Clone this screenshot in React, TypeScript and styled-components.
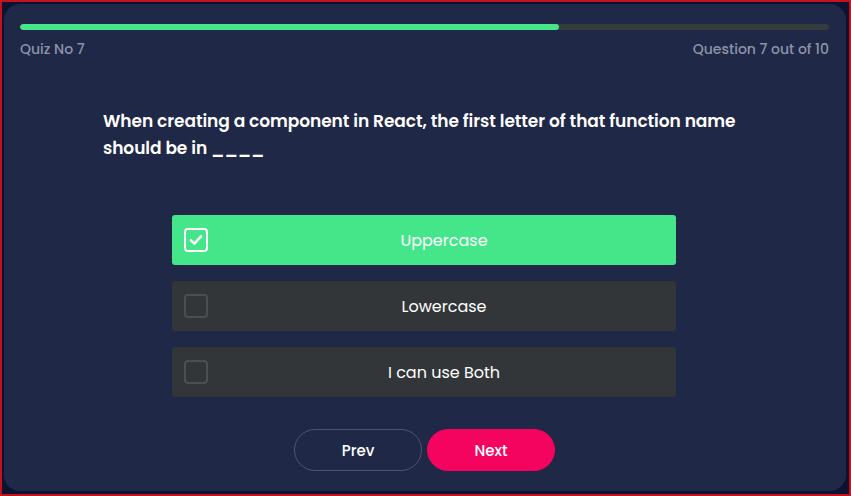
import React from "react";
import styled, { createGlobalStyle } from "styled-components";

const Global = createGlobalStyle`
  html, body { margin: 0; padding: 0; }
  body { background: #0e1232; font-family: "Poppins", "Inter", "Noto Sans", sans-serif; }
  #root { width: 851px; height: 496px; }
`;

const Frame = styled.div`
  box-sizing: border-box;
  width: 851px;
  height: 496px;
  border: 2px solid #c3121b;
  background: #0e1232;
  padding: 2px 3px 3px 2px;
  display: flex;
`;

const Card = styled.div`
  flex: 1;
  background: #1f2847;
  border-radius: 16px;
  padding: 20px 17px 20px 16px;
  display: flex;
  flex-direction: column;
`;

const Track = styled.div`
  height: 8px;
  border-radius: 4px;
  background: #363b3d;
  overflow: hidden;
`;

const Fill = styled.div`
  height: 100%;
  border-radius: 4px;
  background: #45e68a;
`;

const Meta = styled.div`
  display: flex;
  justify-content: space-between;
  margin-top: 9px;
  font-size: 14px;
  font-weight: 500;
  line-height: 20px;
  color: #8e94a8;
`;

const Question = styled.div`
  margin: 49px 0 0 83px;
  width: 660px;
  font-size: 17px;
  font-weight: 600;
  line-height: 27px;
  color: #ffffff;
  letter-spacing: -0.07px;
`;

const Options = styled.div`
  margin: 53px 0 0 152px;
  width: 504px;
  display: flex;
  flex-direction: column;
  gap: 16px;
`;

const Option = styled.div<{ $active?: boolean }>`
  height: 50px;
  border-radius: 3px;
  background: ${(p) => (p.$active ? "#45e68a" : "#333638")};
  display: flex;
  align-items: center;
  padding: 0 0 0 12px;
`;

const Box = styled.span<{ $active?: boolean }>`
  box-sizing: border-box;
  width: 24px;
  height: 24px;
  border-radius: 4px;
  border: 2px solid ${(p) => (p.$active ? "#ffffff" : "#4c4f52")};
  display: flex;
  align-items: center;
  justify-content: center;
`;

const Label = styled.span`
  flex: 1;
  text-align: center;
  font-size: 16px;
  color: #ffffff;
  padding-left: 4px;
`;

const Buttons = styled.div`
  margin-top: 32px;
  display: flex;
  justify-content: center;
  gap: 5px;
`;

const Btn = styled.button<{ $primary?: boolean }>`
  box-sizing: border-box;
  width: 128px;
  height: 42px;
  border-radius: 21px;
  font-family: inherit;
  font-size: 15px;
  font-weight: 500;
  color: #ffffff;
  background: ${(p) => (p.$primary ? "#f4035f" : "transparent")};
  border: 1px solid ${(p) => (p.$primary ? "#f4035f" : "#4d5370")};
`;

const options = ["Uppercase", "Lowercase", "I can use Both"];

export default function App() {
  return (
    <Frame>
      <Global />
      <Card>
        <Track>
          <Fill style={{ width: `${(539 / 809) * 100}%` }} />
        </Track>
        <Meta>
          <span>Quiz No 7</span>
          <span>Question 7 out of 10</span>
        </Meta>
        <Question>
          When creating a component in React, the first letter of that function name should be in ____
        </Question>
        <Options>
          {options.map((o, i) => (
            <Option key={o} $active={i === 0}>
              <Box $active={i === 0}>
                {i === 0 && (
                  <svg width="16" height="16" viewBox="0 0 16 16">
                    <path d="M3 8.4 L6.4 11.6 L13 4.4" fill="none" stroke="#fff" strokeWidth="2.6" strokeLinecap="round" strokeLinejoin="round" />
                  </svg>
                )}
              </Box>
              <Label>{o}</Label>
            </Option>
          ))}
        </Options>
        <Buttons>
          <Btn>Prev</Btn>
          <Btn $primary>Next</Btn>
        </Buttons>
      </Card>
    </Frame>
  );
}
